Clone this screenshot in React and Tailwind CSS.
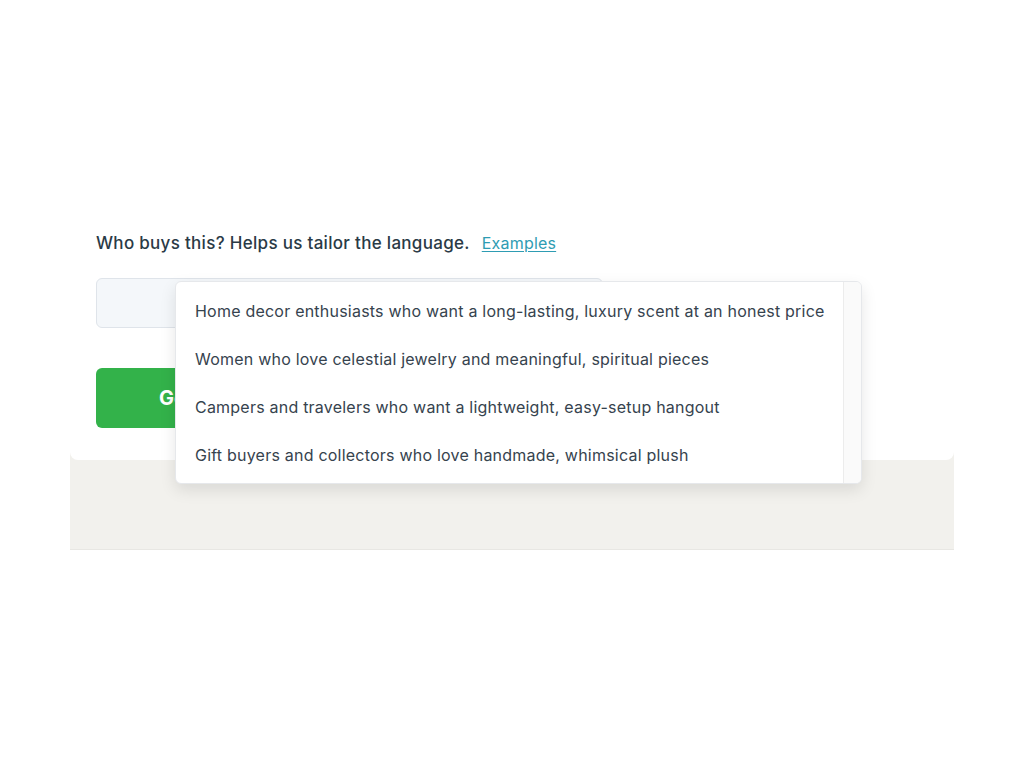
import React from 'react';

const audiences = [
  'Home decor enthusiasts who want a long-lasting, luxury scent at an honest price',
  'Women who love celestial jewelry and meaningful, spiritual pieces',
  'Campers and travelers who want a lightweight, easy-setup hangout',
  'Gift buyers and collectors who love handmade, whimsical plush',
];

const App = () => {
  return (
    <div className="min-h-[768px] bg-white font-['Inter',sans-serif] pt-[180px]">
      <div className="ml-[70px] w-[884px]">
        {/* Card */}
        <div className="relative z-10 bg-white rounded-lg px-[26px] pt-[51px] pb-[32px]">
          <div className="flex items-center gap-[12px] leading-6">
            <span className="text-[17px] font-medium tracking-[0.3px] text-[#2a3a46]">
              Who buys this? Helps us tailor the language.
            </span>
            <a href="#" className="text-[16px] tracking-[0.2px] text-[#2e9cb3] underline underline-offset-2">
              Examples
            </a>
          </div>

          <input
            className="mt-[23px] block w-[507px] h-[50px] rounded-md border border-[#dfe4ea] bg-[#f4f7fa] px-4 outline-none"
            type="text"
          />

          <button className="mt-[40px] h-[60px] rounded-md bg-[#33b24a] px-[63px] text-[20px] font-bold text-white">
            Generate descriptions
          </button>

          {/* Suggestions dropdown */}
          <div className="absolute left-[105px] top-[101px] w-[687px] h-[203px] flex rounded-md border border-[#e6e8eb] bg-white shadow-[0_6px_16px_rgba(0,0,0,0.1)] overflow-hidden">
            <ul className="flex-1 min-w-0 py-[5px]">
              {audiences.map((a) => (
                <li key={a} className="h-[48px] flex items-center px-[19px] whitespace-nowrap text-[16px] tracking-[0.22px] text-[#36434e]">
                  {a}
                </li>
              ))}
            </ul>
            <div className="w-[18px] shrink-0 border-l border-[#ececec] bg-[#fafafa]" />
          </div>
        </div>
        <div className="-mt-2 h-[98px] bg-[#f2f1ed] border-b border-[#e8e7e3]" />
      </div>
    </div>
  );
};

export default App;
